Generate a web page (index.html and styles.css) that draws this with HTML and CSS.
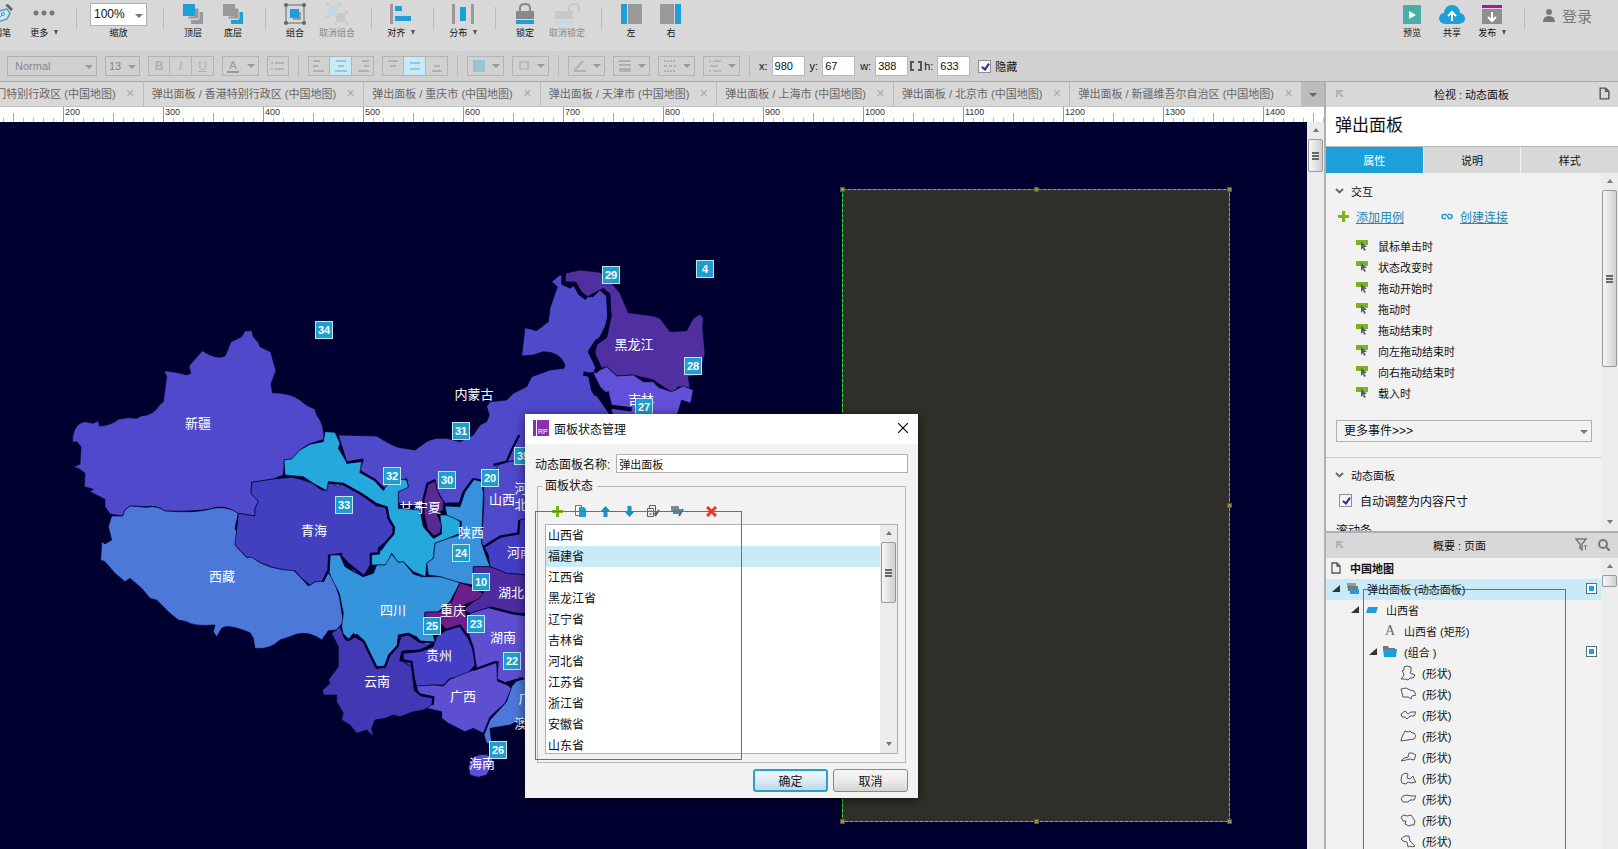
FILE: index.html
```html
<!DOCTYPE html>
<html lang="zh-CN">
<head>
    <meta charset="UTF-8">
    <meta name="viewport" content="width=device-width, initial-scale=1.0">
    <title>中国地图</title>
    <link rel="stylesheet" href="styles.css">
</head>
<body>
    <!-- icons used more than once -->
    <svg class="defs" width="0" height="0">
        <symbol id="i-event" viewBox="0 0 12 12">
            <path d="M0 0h12v5H9L5 1v4H0z" fill="#7ab51d"/>
            <path d="M5 1l6 6H8l2 3-2 1-1-3-2 2z" fill="#5c6066"/>
        </symbol>
        <symbol id="i-pin" viewBox="0 0 8 8">
            <path d="M1 7V1h6M1 1l6 6" fill="none" stroke="#b3b3b3" stroke-width="2"/>
        </symbol>
        <symbol id="i-page" viewBox="0 0 10 12">
            <path d="M1 1h5l3 3v7H1zM6 1v3h3" fill="none" stroke="currentColor" stroke-width="1.3"/>
        </symbol>
        <symbol id="i-chevron" viewBox="0 0 9 6">
            <path d="M1 1l3.5 3.5L8 1" fill="none" stroke="#666" stroke-width="1.8"/>
        </symbol>
        <symbol id="i-plus" viewBox="0 0 11 11">
            <path d="M4 0h3v4h4v3H7v4H4V7H0V4h4z" fill="#7ab51d"/>
        </symbol>
    </svg>

    <header class="toolbar">
        <button class="tool tool-pen">
            <svg width="22" height="22" viewBox="0 0 22 22"><path d="M4 20L8 8l8-2 3 4-3 6z" fill="#cfe8f3" stroke="#4d9cc0" stroke-width="1.5"/><path d="M4 20l7-8" stroke="#4d9cc0"/><circle cx="12" cy="11" r="1.5" fill="none" stroke="#4d9cc0"/><path d="M14 2l6 6 2-2-5-5z" fill="#666"/></svg>
            <span>钢笔</span>
        </button>
        <button class="tool">
            <svg width="22" height="22" viewBox="0 0 22 22"><g fill="#777"><circle cx="3" cy="10" r="2.5"/><circle cx="11" cy="10" r="2.5"/><circle cx="19" cy="10" r="2.5"/></g></svg>
            <span>更多 <i class="caret"></i></span>
        </button>
        <span class="sep"></span>
        <label class="zoom">
            <span class="select zoom-select"><select><option>100%</option></select></span>
            <span>缩放</span>
        </label>
        <span class="sep"></span>
        <button class="tool">
            <svg width="22" height="22" viewBox="0 0 22 22"><path d="M16 9h5v12H9v-4h7z" fill="#999"/><path d="M12 5h5v11H6v-3h6z" fill="#999" stroke="#d8d8d8"/><path d="M1 1h12v12H1z" fill="#1d9fd9"/></svg>
            <span>顶层</span>
        </button>
        <button class="tool">
            <svg width="22" height="22" viewBox="0 0 22 22"><path d="M16 9h5v12H9v-4h7z" fill="#1d9fd9"/><path d="M12 5h5v11H6v-3h6z" fill="#999" stroke="#d8d8d8"/><path d="M1 1h12v12H1z" fill="#999"/></svg>
            <span>底层</span>
        </button>
        <span class="sep"></span>
        <button class="tool">
            <svg width="22" height="22" viewBox="0 0 22 22"><path d="M9 9h8v8H9z" fill="#999"/><path d="M6 6h9v9H6z" fill="#1d9fd9"/><path d="M2 2h18v18H2z" fill="none" stroke="#666"/><g fill="#666"><circle cx="2" cy="2" r="2"/><circle cx="20" cy="2" r="2"/><circle cx="2" cy="20" r="2"/><circle cx="20" cy="20" r="2"/></g></svg>
            <span>组合</span>
        </button>
        <button class="tool tool-wide" disabled>
            <svg width="22" height="22" viewBox="0 0 22 22"><path d="M10 10h9v9h-9z" fill="#c8c8c8"/><path d="M3 3h9v9H3z" fill="#c3d8e0"/><g fill="#ccc"><path d="M0 0h3v3H0zM12 0h3v3h-3zM0 12h3v3H0zM19 8h3v3h-3zM8 19h3v3H8zM19 19h3v3h-3z"/></g></svg>
            <span>取消组合</span>
        </button>
        <span class="sep"></span>
        <button class="tool">
            <svg width="22" height="22" viewBox="0 0 22 22"><path d="M0 1h3v20H0z" fill="#999"/><path d="M5 3h7v5H5zM5 13h16v5H5z" fill="#1d9fd9"/></svg>
            <span>对齐 <i class="caret"></i></span>
        </button>
        <span class="sep"></span>
        <button class="tool">
            <svg width="22" height="22" viewBox="0 0 22 22"><path d="M0 1h3v20H0zM19 1h3v20h-3z" fill="#999"/><path d="M8 4h6v14H8z" fill="#1d9fd9"/></svg>
            <span>分布 <i class="caret"></i></span>
        </button>
        <span class="sep"></span>
        <button class="tool">
            <svg width="22" height="22" viewBox="0 0 22 22"><path d="M6 10V5q0-4 5-4t5 4v5" fill="none" stroke="#888" stroke-width="2"/><path d="M2 8h18v8H2z" fill="#888"/><path d="M2 17h18v4H2z" fill="#1d9fd9"/></svg>
            <span>锁定</span>
        </button>
        <button class="tool tool-wide" disabled>
            <svg width="26" height="22" viewBox="0 0 26 22"><path d="M15 10V5q0-4 5-4t5 4v3" fill="none" stroke="#c8c8c8" stroke-width="2"/><path d="M1 8h18v8H1z" fill="#c8c8c8"/><path d="M1 17h18v4H1z" fill="#bfdce8"/></svg>
            <span>取消锁定</span>
        </button>
        <span class="sep"></span>
        <button class="tool">
            <svg width="22" height="22" viewBox="0 0 22 22"><path d="M1 1h6v20H1z" fill="#1d9fd9"/><path d="M8 1h14v20H8z" fill="#999"/></svg>
            <span>左</span>
        </button>
        <button class="tool">
            <svg width="22" height="22" viewBox="0 0 22 22"><path d="M0 1h14v20H0z" fill="#999"/><path d="M15 1h6v20h-6z" fill="#1d9fd9"/></svg>
            <span>右</span>
        </button>
        <div class="toolbar-end">
            <button class="tool">
                <svg width="22" height="22" viewBox="0 0 22 22"><path d="M2 2h18v19H2z" fill="#4aada6"/><path d="M8 8l7 4-7 4z" fill="#fff"/></svg>
                <span>预览</span>
            </button>
            <button class="tool">
                <svg width="26" height="22" viewBox="0 0 26 22"><path d="M6 21q-6-1-6-6 1-5 5-5Q6 2 13 2t8 8q5 1 5 6 0 4-6 5z" fill="#1d9fd9"/><path d="M13 18v-8M9 13l4-4 4 4" fill="none" stroke="#fff" stroke-width="2"/></svg>
                <span>共享</span>
            </button>
            <button class="tool">
                <svg width="22" height="22" viewBox="0 0 22 22"><path d="M1 2h20v3H1z" fill="#b5119f"/><path d="M1 6h20v15H1z" fill="#8e8e8e"/><path d="M11 9v9M7 14l4 4 4-4" fill="none" stroke="#fff" stroke-width="2"/></svg>
                <span>发布 <i class="caret"></i></span>
            </button>
            <span class="sep"></span>
            <button class="login">
                <svg width="12" height="13" viewBox="0 0 12 13"><circle cx="6" cy="3" r="3" fill="#777"/><path d="M0 13q0-6 6-6t6 6z" fill="#777"/></svg>
                登录
            </button>
        </div>
    </header>

    <div class="formatbar">
        <span class="select format-font"><select aria-label="字体" disabled><option>Normal</option></select></span>
        <span class="select format-size"><select aria-label="字号" disabled><option>13</option></select></span>
        <div class="group">
            <button disabled><b>B</b></button>
            <button disabled><em>I</em></button>
            <button disabled><u>U</u></button>
        </div>
        <button class="drop" disabled><span class="font-color">A</span><i class="caret caret-wide"></i></button>
        <div class="group">
            <button disabled><svg width="14" height="12"><path d="M0 3h2M4 3h9M0 9h2M4 9h9" stroke="#aaa" stroke-width="1.5"/></svg></button>
        </div>
        <span class="sep"></span>
        <div class="group">
            <button disabled><svg width="14" height="12"><path d="M1 1h7M1 6h5M1 11h11" stroke="#b0b0b0" stroke-width="2"/></svg></button>
            <button class="on" disabled><svg width="14" height="12"><path d="M2 1h10M4 6h6M1 11h12" stroke="#9cc6d4" stroke-width="2"/></svg></button>
            <button disabled><svg width="14" height="12"><path d="M6 1h7M8 6h5M2 11h11" stroke="#b0b0b0" stroke-width="2"/></svg></button>
        </div>
        <div class="group">
            <button disabled><svg width="14" height="12"><path d="M2 1h10M4 6h6" stroke="#b0b0b0" stroke-width="2"/></svg></button>
            <button class="on" disabled><svg width="14" height="12"><path d="M2 3h10M2 9h10" stroke="#9cc6d4" stroke-width="2"/></svg></button>
            <button disabled><svg width="14" height="12"><path d="M4 6h6M2 11h10" stroke="#b0b0b0" stroke-width="2"/></svg></button>
        </div>
        <span class="sep"></span>
        <button class="drop" disabled><svg width="14" height="14"><path d="M1 1h12v12H1z" fill="#9cc3d0"/></svg><i class="caret caret-wide"></i></button>
        <button class="drop" disabled><svg width="14" height="14"><path d="M3 3h8v7H3z" fill="none" stroke="#bbb" stroke-width="2"/></svg><i class="caret caret-wide"></i></button>
        <span class="sep"></span>
        <button class="drop" disabled><svg width="14" height="14"><path d="M2 11L10 2M1 12h12" stroke="#b0b0b0" stroke-width="2"/></svg><i class="caret caret-wide"></i></button>
        <button class="drop" disabled><svg width="14" height="14"><path d="M1 2h12M1 6h12" stroke="#b0b0b0" stroke-width="2"/><path d="M1 11h12" stroke="#b0b0b0" stroke-width="4"/></svg><i class="caret caret-wide"></i></button>
        <button class="drop" disabled><svg width="14" height="14"><path d="M1 2h12M1 12h12" stroke="#b0b0b0" stroke-width="2" stroke-dasharray="2 1"/><path d="M1 7h12" stroke="#b0b0b0" stroke-width="2" stroke-dasharray="3 2"/></svg><i class="caret caret-wide"></i></button>
        <button class="drop" disabled><svg width="14" height="14"><path d="M5 2h8M2 7h8M5 12h8M1 2h2M1 12h2" stroke="#b0b0b0" stroke-width="1.5"/></svg><i class="caret caret-wide"></i></button>
        <span class="sep"></span>
        <div class="coords">
            <label class="coord">x: <input type="text" value="980"></label>
            <label class="coord">y: <input type="text" value="67"></label>
            <div class="size">
                <label class="coord">w: <input type="text" value="388"></label>
                <svg width="12" height="10"><path d="M4 1H1v8h3M8 1h3v8H8" fill="none" stroke="#555" stroke-width="2"/></svg>
                <label class="coord">h: <input type="text" value="633"></label>
            </div>
        </div>
        <label class="check check-bar"><input type="checkbox" checked>隐藏</label>
    </div>

    <div class="workspace">
        <main class="editor">
            <nav class="tabs">
                <div class="tabs-list">
                    <div class="tab">弹出面板 / 澳门特别行政区 (中国地图)<button>✕</button></div>
                    <div class="tab">弹出面板 / 香港特别行政区 (中国地图)<button>✕</button></div>
                    <div class="tab">弹出面板 / 重庆市 (中国地图)<button>✕</button></div>
                    <div class="tab">弹出面板 / 天津市 (中国地图)<button>✕</button></div>
                    <div class="tab">弹出面板 / 上海市 (中国地图)<button>✕</button></div>
                    <div class="tab">弹出面板 / 北京市 (中国地图)<button>✕</button></div>
                    <div class="tab">弹出面板 / 新疆维吾尔自治区 (中国地图)<button>✕</button></div>
                </div>
                <button class="tabs-more" aria-label="更多标签"><i class="caret caret-wide"></i></button>
            </nav>
            <div class="ruler">
                <span>200</span><span>300</span><span>400</span><span>500</span><span>600</span><span>700</span><span>800</span><span>900</span><span>1000</span><span>1100</span><span>1200</span><span>1300</span><span>1400</span>
            </div>
            <div class="stage">
                <div class="canvas">
                    <svg class="map" width="1307" height="727" viewBox="0 122 1307 727">
                        <!-- west -->
                        <g class="land" transform="translate(50 310) scale(.33333)">
                            <path fill="#5049cb" d="M343 185L350 183Q390 188 410 195L422 190 417 168 457 122Q500 150 525 138 538 110 542 96L575 80 585 63 605 62 610 80 625 98 630 110 662 126 678 182 663 222 667 248Q720 248 750 270 770 290 795 297L800 315Q822 340 822 388L775 403 750 420 727 447 703 450 700 495 670 507 605 517 603 550 615 560 625 575 615 595 615 618 565 610Q520 580 480 597 440 605 345 603 320 585 290 590L240 588 225 600 218 618 180 612 165 590 165 568 120 545 130 538 103 530 105 490 85 475 68 472 90 462 93 410 80 395 68 397Q65 360 90 340L105 335 130 340 145 332 148 348Q180 348 205 328L235 323 260 325 275 317Q310 318 330 283L340 275 350 200z"/>
                            <path fill="#4c78da" d="M240 588L290 592Q320 585 345 603 440 610 480 597 530 585 565 610L555 655 567 680 555 705 590 742 605 740Q650 780 730 780L750 800 775 828 835 790 850 805 868 860 880 935 860 960 835 962 815 990 800 980Q760 960 720 980L690 990Q660 1020 615 1015L610 985 600 968Q530 940 515 955L500 980 490 965 495 945Q430 950 410 935L385 930 360 910 320 870 300 865 275 835 240 805 225 815 195 790 165 755 152 750 155 695 165 702 185 690 175 650 185 618 218 618 225 600z"/>
                        </g>
                        <!-- centre and south -->
                        <g class="land" transform="translate(260 400) scale(.33333)">
                            <path fill="#4f4aca" d="M235 105L350 108Q400 140 420 143L465 150 500 125Q520 112 560 115L600 125 640 105 660 75 680 65 688 45 680 20 690 5 740 0 760-20 800-40 815-70 870-90 912-95 915-105Q900-145 850-145L820-135 785-132 795-217 830-208 865-235 870-275 892-340 875-355 900-375 912-370 910-345 930-335 945-345 970-310 1000-310 1020-330 1040-320 1045-240 1020-190 990-150 1010-85 985-80 1005-20 1040 30 1060 60 800 180 740 185 700 215 665 240 640 235 610 275 600 310 555 310 530 270 525 240 500 250 490 320 415 310 415 275 445 260 440 235 375 265 345 240 300 210 310 180 262 190z"/>
                            <path fill="#4340c0" d="M-25 247L40 237 95 232Q140 240 165 255 185 275 200 270L205 250Q230 245 250 255L270 262 305 285 350 318 378 320 385 355 400 380 400 400 375 430 355 445 355 460 330 460 330 495 310 530 280 515 265 490 245 470 245 460 205 465 205 510 185 545 165 545 150 555 125 535 105 512Q30 510-25 472L-40 472-75 435-65 340-15 348-15 325-5 305-27 280z"/>
                            <text class="province big" x="458" y="336">甘肃</text>
                            <path fill="#25a9dd" d="M195 95L225 97 240 130 235 145 262 190 305 185 300 215 345 240 370 270 400 235 440 240 445 262 415 275 415 325 480 330 490 380 520 415 545 395 540 345 570 345 600 365 600 400 565 415 525 430 520 475 500 490 497 530 460 515 430 485 415 487 395 460 380 495 335 495 335 465 365 450 400 400 400 380 385 355 378 320 350 310 305 280 250 250 235 260 205 245 200 272 160 250 130 230 75 225 72 180 95 177 120 150 150 133 190 125z"/>
                            <path fill="#5a2a92" d="M525 240L530 265 540 290 550 300 550 330 530 340 545 375 540 400 520 410 497 385 485 330 495 280 505 250z"/>
                            <path fill="#3990db" d="M640 238L665 245 670 280 665 430 675 460 690 500 640 500 640 555 600 548 570 542 540 530 505 525 500 490 520 475 525 430 565 415 600 405 605 365 560 345 555 318 600 320 615 275z"/>
                            <path fill="#5049cb" d="M670 240L700 215 720 190 740 185 800 180V350L775 400 720 410 672 440 665 430 672 300z"/>
                            <path fill="#443ec4" d="M672 440L720 410 775 400 778 360 800 355V525L740 520 690 500 685 465z"/>
                            <path fill="#3494dc" d="M205 510L210 465 240 465 255 500 280 515 310 530 340 520 350 495 375 495 395 462 415 487 430 485 460 522 485 530 540 530 600 548 570 605 535 635 495 637 490 700 520 705 525 725 495 740 470 710 445 700 415 705 412 740 385 765 375 800 350 800 325 750 310 720 290 710 280 700 265 720 250 705 245 680 250 640 238 580 215 535z"/>
                            <path fill="#4d2ca0" d="M640 500L690 500 740 520 800 525V640L760 640 690 622 630 640 610 630 670 580 665 550 640 525z"/>
                            <path fill="#5d4fd0" d="M630 640L690 622 760 640 800 645V840L760 840 740 850 710 840 715 785 650 805 640 740 625 700z"/>
                            <path fill="#6a1f8a" d="M600 548L635 560 670 580 655 598 610 615 620 650 630 690 620 710 600 675 560 690 530 660 495 650 495 637 540 635 575 605z"/>
                            <path fill="#4338b4" d="M215 700L240 680 255 718 265 722 280 705 290 715 310 725 325 755 350 805 375 800 390 765 415 735 425 705 445 702 480 725 510 740 480 750 425 755 420 780 455 800 465 870 480 885 520 890 520 915 490 930 460 935 420 950 400 945 375 955 345 960 335 985 340 1010 320 990 290 1000 270 975 245 960 250 940 230 905 230 885 190 885 188 870 210 850 205 840 235 800 235 740z"/>
                            <path fill="#443ec4" d="M430 760L480 755 520 740 530 710 560 690 600 675 620 705 635 740 640 760 645 795 615 830 570 835 550 855 520 855 470 860 455 800 430 785z"/>
                            <path fill="#5d4fd0" d="M470 858L520 855 550 858 570 838 640 810 710 785 712 840 735 850 755 865 735 910 690 950 670 1000 640 985 615 995 565 970 545 955 545 935 500 925 520 910 520 890 475 880z"/>
                            <path fill="#4c78da" d="M755 860L780 830 800 840V950L750 975 690 985 695 1030 680 1030 672 1005 690 960 740 905z"/>
                            <path fill="#5d4fd0" d="M625 1100L640 1070Q690 1050 700 1085L680 1125 655 1132 630 1125z"/>
                            <path class="river thin" d="M258 188L310 179M300 215L345 240 372 270M205 247L250 252 305 283 350 314 380 322 386 355 402 382 400 402 375 430 357 445 357 460 332 462M525 240L502 252 490 300 490 340 500 388 522 412 545 398M640 237L610 278 600 310 560 312M208 465L206 510 188 545M245 470L265 492 310 528M250 705L265 720 290 705 312 725 325 753 350 803 375 800 388 766 413 738 418 708 445 702 480 725 522 728M512 738L480 752 428 755 422 780 455 786 458 810 465 870 482 885 520 892 518 915M672 440L720 410 775 400 778 360M690 622L760 640 800 645M530 660L555 690 600 677 622 708M640 810L710 785M712 840L735 850 790 835M778 105L755 150 740 185 700 195"/>
                        </g>
                        <!-- north east -->
                        <g class="land" transform="translate(440 240) scale(.33333)">
                            <path fill="#502fa0" d="M375 100L420 90 480 97 520 135 540 160 565 218 640 228 660 235 690 275 740 272 760 235 780 222 790 235 788 265 795 340 780 405 745 410 750 445 715 440 700 460 655 430 640 420 580 405 530 408 500 380 485 385 465 340 470 315 500 290 512 230 508 165 485 148 460 160 440 172 420 155 410 130 385 128 370 135z"/>
                            <path fill="#6250d8" d="M460 400L500 380 530 408 580 405 610 425 640 425 655 442 695 455 730 438 760 450 752 490 725 480 710 530 520 530 500 460 480 440z"/>
                            <path class="river" d="M372 95L370 130 405 132 420 160 440 175M485 148L505 165 508 230 495 290 470 305 450 335 475 385 465 395M430 400L450 405 460 450 470 465M500 455L510 500 575 508"/>
                        </g>

                        <g class="province">
                            <text x="198" y="428">新疆</text>
                            <text x="222" y="581">西藏</text>
                            <text x="314" y="535">青海</text>
                            <text x="393" y="615">四川</text>
                            <text x="377" y="686">云南</text>
                            <text x="439" y="660">贵州</text>
                            <text x="463" y="701">广西</text>
                            <text x="482" y="768">海南</text>
                            <text x="503" y="642">湖南</text>
                            <text x="511" y="597">湖北</text>
                            <text x="453" y="615">重庆</text>
                            <text x="428" y="512">宁夏</text>
                            <text x="471" y="537">陕西</text>
                            <text x="502" y="504">山西</text>
                            <text x="520" y="557">河南</text>
                            <text x="521" y="493">河</text>
                            <text x="521" y="509">北</text>
                            <text x="525" y="703">广</text>
                            <text x="521" y="728">澳</text>
                            <text x="634" y="349">黑龙江</text>
                            <text x="641" y="404">吉林</text>
                            <text x="474" y="399">内蒙古</text>
                        </g>

                        <!-- dynamic panel selected on the canvas -->
                        <g class="selection">
                            <rect class="panel-area" x="842.5" y="189.5" width="387" height="632"/>
                            <path class="handles" d="M840.5 187.500h4v4h-4zM1034.500 187.500h4v4h-4zM1227.500 187.500h4v4h-4zM1227.500 503.500h4v4h-4zM1227.500 819.500h4v4h-4zM1034.500 819.500h4v4h-4zM840.5 819.500h4v4h-4z"/>
                        </g>
                    </svg>
                    <span class="note" style="left: 315px; top: 199px">34</span>
                    <span class="note" style="left: 335px; top: 374px">33</span>
                    <span class="note" style="left: 383px; top: 345px">32</span>
                    <span class="note" style="left: 452px; top: 300px">31</span>
                    <span class="note" style="left: 438px; top: 349px">30</span>
                    <span class="note" style="left: 481px; top: 347px">20</span>
                    <span class="note" style="left: 514px; top: 325px">35</span>
                    <span class="note" style="left: 452px; top: 422px">24</span>
                    <span class="note" style="left: 472px; top: 451px">10</span>
                    <span class="note" style="left: 423px; top: 495px">25</span>
                    <span class="note" style="left: 467px; top: 493px">23</span>
                    <span class="note" style="left: 503px; top: 530px">22</span>
                    <span class="note" style="left: 489px; top: 619px">26</span>
                    <span class="note" style="left: 602px; top: 144px">29</span>
                    <span class="note" style="left: 696px; top: 138px">4</span>
                    <span class="note" style="left: 684px; top: 235px">28</span>
                    <span class="note" style="left: 635px; top: 276px">27</span>

                    <section class="dialog">
                        <div class="dialog-title">
                            <svg width="16" height="16"><path d="M0 0h16v16H0z" fill="#8c2fb0"/><path d="M3 0h1v16H3z" fill="#fff"/><text x="5" y="14" class="rp">RP</text></svg>
                            <h2>面板状态管理</h2>
                            <button aria-label="关闭"><svg width="10" height="10"><path d="M0 0l10 10M10 0L0 10" stroke="#000" stroke-width="1.2"/></svg></button>
                        </div>
                        <div class="dialog-body">
                            <label class="panel-name">动态面板名称: <input type="text" value="弹出面板"></label>
                            <fieldset>
                                <legend>面板状态</legend>
                                <div class="state-tools">
                                    <button aria-label="添加"><svg width="11" height="11"><use href="#i-plus"/></svg></button>
                                    <button aria-label="复制"><svg width="12" height="12"><path d="M.5.5h6v10h-6z" fill="#fff" stroke="#1d8fc4"/><path d="M4 2h5l2 2v8H4z" fill="#1d9fd9"/></svg></button>
                                    <button aria-label="上移"><svg width="9" height="11"><path d="M4.500 0L9 5H6.500v6h-4V5H0z" fill="#1d8fc4"/></svg></button>
                                    <button aria-label="下移"><svg width="9" height="11"><path d="M4.500 11L9 6H6.500V0h-4v6H0z" fill="#1d8fc4"/></svg></button>
                                    <button aria-label="编辑状态"><svg width="13" height="12"><path d="M.5 3.500h6v8h-6zM2.500 3V.5h6v8h-2M2 6h3M2 9h3" fill="none" stroke="#47627a"/><path d="M8 11l4-6" stroke="#555" stroke-width="2"/></svg></button>
                                    <button aria-label="编辑全部状态"><svg width="13" height="12"><path d="M0 1h8v5H0z" fill="#888"/><path d="M2 4h8v5H2z" fill="#4a8db0"/><path d="M8 11l4-7" stroke="#666" stroke-width="2"/></svg></button>
                                    <button class="remove" aria-label="删除"><svg width="11" height="11"><path d="M1 1l9 9M10 1l-9 9" stroke="#e8392b" stroke-width="3"/></svg></button>
                                </div>
                                <div class="states">
                                    <ul>
                                        <li>山西省</li>
                                        <li class="selected">福建省</li>
                                        <li>江西省</li>
                                        <li>黑龙江省</li>
                                        <li>辽宁省</li>
                                        <li>吉林省</li>
                                        <li>河北省</li>
                                        <li>江苏省</li>
                                        <li>浙江省</li>
                                        <li>安徽省</li>
                                        <li>山东省</li>
                                    </ul>
                                    <div class="scrollbar"><i class="up"></i><b class="thumb thumb-states"></b><i class="down"></i></div>
                                </div>
                            </fieldset>
                            <div class="dialog-actions">
                                <button class="primary">确定</button>
                                <button>取消</button>
                            </div>
                        </div>
                        <span class="mark mark-states"></span>
                    </section>
                </div>
                <div class="scrollbar"><i class="up"></i><b class="thumb thumb-stage"></b></div>
            </div>
        </main>

        <aside class="sidebar">
            <div class="side-head">
                <svg width="8" height="8"><use href="#i-pin"/></svg>
                <h3>检视 : 动态面板</h3>
                <svg class="page-icon" width="11" height="13"><use href="#i-page"/></svg>
            </div>
            <div class="side-name">弹出面板</div>
            <div class="side-tabs">
                <button class="active">属性</button>
                <button>说明</button>
                <button>样式</button>
            </div>
            <div class="side-scroll props-scroll">
                <div class="props">
                    <h4><svg width="9" height="6"><use href="#i-chevron"/></svg>交互</h4>
                    <div class="links">
                        <svg width="11" height="11"><use href="#i-plus"/></svg><a href="#">添加用例</a>
                        <svg class="chain" width="12" height="7"><path d="M5 5.500H3a2 2 0 010-4h2l3 4h1a2 2 0 000-4H7" fill="none" stroke="#2a98c9" stroke-width="1.5"/></svg><a href="#">创建连接</a>
                    </div>
                    <ul class="events">
                        <li><svg width="12" height="12"><use href="#i-event"/></svg>鼠标单击时</li>
                        <li><svg width="12" height="12"><use href="#i-event"/></svg>状态改变时</li>
                        <li><svg width="12" height="12"><use href="#i-event"/></svg>拖动开始时</li>
                        <li><svg width="12" height="12"><use href="#i-event"/></svg>拖动时</li>
                        <li><svg width="12" height="12"><use href="#i-event"/></svg>拖动结束时</li>
                        <li><svg width="12" height="12"><use href="#i-event"/></svg>向左拖动结束时</li>
                        <li><svg width="12" height="12"><use href="#i-event"/></svg>向右拖动结束时</li>
                        <li><svg width="12" height="12"><use href="#i-event"/></svg>载入时</li>
                    </ul>
                    <span class="select more-events"><select aria-label="更多事件"><option>更多事件&gt;&gt;&gt;</option></select></span>
                    <h4 class="ruled"><svg width="9" height="6"><use href="#i-chevron"/></svg>动态面板</h4>
                    <label class="check check-fit"><input type="checkbox" checked>自动调整为内容尺寸</label>
                    <div class="scroll-label">滚动条</div>
                </div>
                <div class="scrollbar"><i class="up"></i><b class="thumb thumb-props"></b><i class="down"></i></div>
            </div>
            <div class="side-head outline-head">
                <svg width="8" height="8"><use href="#i-pin"/></svg>
                <h3>概要 : 页面</h3>
                <svg width="13" height="13"><path d="M1 1h10L7 6v6L5 10V6z" fill="none" stroke="#777" stroke-width="1.5"/><path d="M10.500 12V7M9 8.500L10.500 7 12 8.500" fill="none" stroke="#777"/></svg>
                <svg width="12" height="12"><circle cx="5" cy="5" r="4" fill="none" stroke="#777" stroke-width="2"/><path d="M8 8l4 4" stroke="#777" stroke-width="2"/></svg>
            </div>
            <div class="side-scroll tree-scroll">
                <ul class="tree">
                    <li class="root"><span class="icon"><svg class="page-icon" width="10" height="12"><use href="#i-page"/></svg></span>中国地图</li>
                    <li class="selected"><i class="fold"></i><span class="icon"><svg width="13" height="11"><path d="M0 0h9v5H0z" fill="#999"/><path d="M1 3h10v5H1z" fill="#777"/><path d="M3 6h9v5H3z" fill="#1d9fd9"/></svg></span>弹出面板 (动态面板)<b class="eye"></b></li>
                    <li class="l1"><i class="fold"></i><span class="icon"><svg width="12" height="6"><path d="M2 0h10l-2 6H0z" fill="#1d9fd9"/></svg></span>山西省</li>
                    <li class="l2"><i class="fold none"></i><span class="icon letter">A</span>山西省 (矩形)</li>
                    <li class="l2"><i class="fold"></i><span class="icon"><svg width="14" height="11"><path d="M0 0h5l1 2h6v3H0z" fill="#777"/><path d="M0 3h14l-1 8H1z" fill="#1d9fd9"/></svg></span>(组合 )<b class="eye"></b></li>
                    <li class="l3"><i class="fold none"></i><span class="icon"><svg width="16" height="16"><path d="M4 2l3-1 4 1 0 4-1 2 5 2-2 3-3 0-2 2-3-1-4 0 3-4-1-3-1-1 2-1z"/></svg></span>(形状)</li>
                    <li class="l3"><i class="fold none"></i><span class="icon"><svg width="16" height="16"><path d="M1 3l5-1 4 2 4 1 2 4-4 1-1 3-3-2-5 0-1-4z"/></svg></span>(形状)</li>
                    <li class="l3"><i class="fold none"></i><span class="icon"><svg width="16" height="16"><path d="M1 7l4-3 3 3 3-2 5 0-2 4-4 0-3 3-2-2-3 0z"/></svg></span>(形状)</li>
                    <li class="l3"><i class="fold none"></i><span class="icon"><svg width="16" height="16"><path d="M1 13l1-4 3-6 3 1 2-1 2 2 2 0 2 3-2 3-6 1z"/></svg></span>(形状)</li>
                    <li class="l3"><i class="fold none"></i><span class="icon"><svg width="16" height="16"><path d="M1 12l3-3 4-1 1-4 3 0 4 2-2 5-4-1-4 1z"/></svg></span>(形状)</li>
                    <li class="l3"><i class="fold none"></i><span class="icon"><svg width="16" height="16"><path d="M1 10l1-5 3-2 3 1-1 4 3 1 3-3 1 3 2 3-5 1-3-1-2 2-4-1z"/></svg></span>(形状)</li>
                    <li class="l3"><i class="fold none"></i><span class="icon"><svg width="16" height="16"><path d="M1 8l2-3 4-1 4 1 5 0-2 4-4 0-2 2-5 0z"/></svg></span>(形状)</li>
                    <li class="l3"><i class="fold none"></i><span class="icon"><svg width="16" height="16"><path d="M1 5l3-2 3 1 4-1 2 3 2 3-1 4-3 0-2 1-4-2 1-3-3 0z"/></svg></span>(形状)</li>
                    <li class="l3"><i class="fold none"></i><span class="icon"><svg width="16" height="16"><path d="M1 6l4-3 4 0 1 5 2 2 3 3-3 1-2-1-2 1-1-5-4-1z"/></svg></span>(形状)</li>
                </ul>
                <div class="scrollbar"><i class="up"></i><b class="thumb thumb-tree"></b></div>
                <span class="mark mark-tree"></span>
            </div>
        </aside>
    </div>
</body>
</html>
```

FILE: styles.css
```css
* {
    box-sizing: border-box;
}
body {
    margin: 0;
    height: 100vh;
    display: flex;
    flex-direction: column;
    overflow: hidden;
    background-color: #f2f2f2;
    color: #111;
    font-family: "Liberation Sans", "Noto Sans CJK SC", sans-serif;
    font-size: 11px;
}
button, input, select {
    font: inherit;
    color: inherit;
    margin: 0;
    padding: 0;
}
button {
    background: none;
    border: none;
}
ul {
    list-style: none;
    margin: 0;
    padding: 0;
}
h2, h3, h4 {
    margin: 0;
    font-weight: normal;
    font-size: 11px;
}
svg {
    display: block;
    flex: none;
}
.defs {
    position: absolute;
}
.caret {
    display: inline-block;
    border: 2px solid transparent;
    border-top: 5px solid #555;
    border-bottom: 0;
    margin-left: 3px;
    vertical-align: 1px;
}
.caret-wide {
    border-width: 4px 4px 0;
    border-top-color: #999;
    margin: 0;
}

/* select with a flat arrow */
.select {
    display: inline-block;
    position: relative;
    border: 1px solid #b0b0b0;
}
.select select {
    appearance: none;
    width: 100%;
    height: 100%;
    border: none;
    background: none;
    padding-left: 7px;
    opacity: 1;
}
.select::after {
    content: "";
    position: absolute;
    right: 3px;
    top: 50%;
    margin-top: -1px;
    border: 4px solid transparent;
    border-top-color: #777;
    border-bottom: 0;
}

/* main toolbar */
.toolbar {
    display: flex;
    flex: none;
    height: 51px;
    padding-top: 3px;
    background-color: #d8d8d8;
    font-size: 9px;
}
.tool {
    flex: none;
    width: 40px;
    display: flex;
    flex-direction: column;
    align-items: center;
    gap: 2px;
    height: 40px;
    line-height: 13px;
    white-space: nowrap;
}
.tool-pen {
    margin-left: -18px;
    margin-right: 2px;
}
.tool-wide {
    width: 44px;
}
.tool:disabled {
    color: #888;
}
.sep {
    flex: none;
    width: 1px;
    height: 22px;
    background-color: #bbb;
    margin: 4px 9px 0 12px;
}
.zoom {
    width: 65px;
    display: flex;
    flex-direction: column;
    align-items: center;
    line-height: 13px;
}
.zoom-select {
    width: 57px;
    height: 23px;
    margin-bottom: 1px;
    background-color: #fff;
    font-size: 12px;
}
.zoom-select select {
    padding-left: 3px;
}
.toolbar-end {
    display: flex;
    margin-left: auto;
    padding-right: 26px;
}
.login {
    display: flex;
    align-items: center;
    gap: 7px;
    height: 24px;
    margin-left: 9px;
    font-size: 15px;
    color: #777;
}

/* format bar */
.formatbar {
    display: flex;
    flex: none;
    align-items: center;
    gap: 8px;
    height: 30px;
    padding-left: 7px;
    background-color: #d1d1d1;
}
.formatbar .sep {
    margin: 0 1px;
}
.formatbar .select {
    height: 20px;
    color: #888;
}
.formatbar .select::after {
    border-top-color: #999;
}
.format-font {
    width: 90px;
}
.format-size {
    width: 35px;
}
.format-size select {
    padding-left: 3px;
}
.group {
    display: flex;
    height: 20px;
    border: 1px solid #b3b3b3;
}
.group button {
    display: flex;
    align-items: center;
    justify-content: center;
    width: 20px;
    color: #b0b0b0;
    font-size: 12px;
}
.group button + button {
    width: 22px;
    border-left: 1px solid #b3b3b3;
}
.group em {
    font-family: "Liberation Serif", serif;
}
.group .on {
    background-color: #c8eaf8;
}
.drop {
    display: flex;
    align-items: center;
    justify-content: space-between;
    width: 37px;
    height: 20px;
    padding: 0 3px 0 4px;
    border: 1px solid #b3b3b3;
    color: #999;
}
.font-color {
    width: 12px;
    line-height: 12px;
    border-bottom: 2px solid #999;
}
.coords {
    display: flex;
    align-items: center;
    gap: 5px;
}
.coord {
    display: flex;
    align-items: center;
    gap: 4px;
    font-size: 11px;
}
.coord input {
    width: 33px;
    height: 20px;
    border: 1px solid #b8b8b8;
    background-color: #fff;
    padding-left: 2px;
}
.size {
    display: flex;
    align-items: center;
    gap: 2px;
}
.check {
    display: flex;
    align-items: center;
}
.check input {
    appearance: none;
    position: relative;
    width: 13px;
    height: 13px;
    border: 1px solid #8e8f8f;
    background-color: #f2f4f8;
}
.check input:checked::before {
    content: "";
    position: absolute;
    left: 4px;
    top: 1px;
    width: 3px;
    height: 6px;
    border: solid #28328c;
    border-width: 0 2px 2px 0;
    transform: rotate(35deg);
}
.check-bar {
    gap: 4px;
}

/* editor */
.workspace {
    flex: 1;
    min-height: 0;
    display: flex;
    border-top: 1px solid #a8a8a8;
}
.editor {
    flex: 1;
    min-width: 0;
    display: flex;
    flex-direction: column;
}
.tabs {
    display: flex;
    flex: none;
    height: 24px;
    background-color: #d8d8d8;
}
.tabs-list {
    flex: 1;
    min-width: 0;
    display: flex;
    justify-content: flex-end;
    overflow: hidden;
}
.tab {
    flex: none;
    display: flex;
    align-items: center;
    gap: 9px;
    padding: 0 7px 2px 8px;
    border-right: 1px solid #bdbdbd;
    color: #666;
    white-space: nowrap;
}
.tab button {
    width: 11px;
    color: #aaa;
    font-family: "DejaVu Sans", sans-serif;
}
.tabs-more {
    width: 22px;
    background-color: #bcbcbc;
}
.tabs-more .caret {
    border-top-color: #666;
}
.ruler {
    flex: none;
    display: flex;
    height: 16px;
    padding-left: 63px;
    overflow: hidden;
    border-top: 1px solid #c4c4c4;
    background:
        repeating-linear-gradient(to right, #999 0 1px, transparent 1px 100px) 63px 0 / 100px 100% repeat-x,
        repeating-linear-gradient(to right, #aaa 0 1px, transparent 1px 50px) 13px 100% / 100px 9px repeat-x,
        repeating-linear-gradient(to right, #bbb 0 1px, transparent 1px 10px) 3px 100% / 100px 4px repeat-x,
        #fff;
}
.ruler span {
    flex: none;
    width: 100px;
    padding-left: 2px;
    font-size: 9px;
    line-height: 11px;
    color: #333;
}
.stage {
    flex: 1;
    min-height: 0;
    display: flex;
}
.canvas {
    flex: 1;
    min-width: 0;
    position: relative;
    overflow: hidden;
    background-color: #000030;
}
.map {
    position: absolute;
    left: 0;
    top: 0;
}
.land path {
    stroke: #000030;
    stroke-width: 2;
    stroke-linejoin: round;
}
.land .river {
    fill: none;
    stroke-width: 13;
}
.land .thin {
    stroke-width: 7;
}
.province {
    fill: #fff;
    font-size: 13px;
    text-anchor: middle;
}
.province.big {
    font-size: 39px;
}
.panel-area {
    fill: #302f29;
    stroke: #35e035;
    stroke-dasharray: 4 1;
}
.handles {
    fill: #9a9048;
    stroke: #5c5c28;
}
.note {
    position: absolute;
    width: 18px;
    height: 18px;
    border: 1px solid #bfe6f5;
    background-color: #1f9dcb;
    color: #fff;
    font-size: 11px;
    font-weight: bold;
    line-height: 16px;
    text-align: center;
}

/* scrollbars */
.scrollbar {
    flex: none;
    display: flex;
    flex-direction: column;
    align-items: center;
    width: 17px;
    background-color: #ececec;
}
.scrollbar .up, .scrollbar .down {
    width: 0;
    height: 0;
    margin: 6px 0 7px;
    border: 3px solid transparent;
    border-top: 0;
    border-bottom: 4px solid #777;
}
.scrollbar .down {
    margin-top: auto;
    border-top: 4px solid #777;
    border-bottom: 0;
}
.thumb {
    display: flex;
    align-items: center;
    justify-content: center;
    width: 15px;
    border: 1px solid #999;
    border-radius: 2px;
    background: linear-gradient(to right, #f6f6f6, #e4e4e4 50%, #cfcfcf);
}
.thumb::before {
    content: "";
    width: 7px;
    height: 8px;
    background: repeating-linear-gradient(#666 0 2px, transparent 2px 3px);
}
.thumb-stage {
    height: 33px;
}
.thumb-states {
    height: 61px;
}
.thumb-props {
    height: 177px;
}
.thumb-tree {
    height: 12px;
}
.thumb-tree::before {
    content: none;
}
.mark {
    position: absolute;
    border: 1px solid #d9404a;
    pointer-events: none;
}

/* panel state dialog */
.dialog {
    position: absolute;
    left: 525px;
    top: 292px;
    width: 393px;
    background-color: #f2f2f2;
    box-shadow: 0 2px 10px rgba(0, 0, 0, 0.6);
    font-size: 12px;
}
.dialog-title {
    display: flex;
    align-items: center;
    gap: 5px;
    height: 30px;
    padding: 0 10px 2px 8px;
    background-color: #fff;
}
.dialog-title h2 {
    flex: 1;
    font-size: 12px;
}
.rp {
    fill: #fff;
    font-size: 7px;
}
.dialog-body {
    padding: 10px 10px 6px 10px;
}
.panel-name {
    display: flex;
    align-items: center;
    gap: 6px;
}
.panel-name input {
    flex: 1;
    min-width: 0;
    height: 19px;
    padding: 0 2px;
    border: 1px solid #b0b0b0;
    background-color: #fff;
    font-size: 11px;
}
fieldset {
    margin: 4px 2px 0 2px;
    padding: 0 7px 8px;
    border: 1px solid #b8b8b8;
}
legend {
    padding: 0 4px 0 3px;
    margin-left: -3px;
    line-height: 18px;
}
.state-tools {
    display: flex;
    align-items: center;
    height: 29px;
    padding-top: 3px;
}
.state-tools button {
    width: 24px;
    display: flex;
    justify-content: center;
}
.state-tools .remove {
    margin-left: 10px;
}
.states {
    display: flex;
    height: 230px;
    border: 1px solid #b0b0b0;
    background-color: #fff;
}
.states ul {
    flex: 1;
    overflow: hidden;
}
.states li {
    height: 21px;
    line-height: 22px;
    padding-left: 2px;
}
.selected {
    background-color: #c9eaf7;
}
.dialog-actions {
    display: flex;
    justify-content: flex-end;
    gap: 5px;
    margin-top: 6px;
}
.dialog-actions button {
    width: 75px;
    height: 23px;
    border: 1px solid #888;
    border-radius: 3px;
    background: linear-gradient(#f6f6f6, #ececec 50%, #d4d4d4);
}
.dialog-actions .primary {
    border: 2px solid #2c9fc6;
    background: linear-gradient(#eef7fc, #dcecf6 50%, #b9d9ec);
}
.mark-states {
    left: 10px;
    top: 97px;
    width: 207px;
    height: 249px;
}

/* sidebar */
.sidebar {
    flex: none;
    width: 294px;
    display: flex;
    flex-direction: column;
    border-left: 2px solid #b0b0b0;
}
.side-head {
    flex: none;
    display: flex;
    align-items: center;
    gap: 10px;
    height: 25px;
    padding: 0 8px 2px 10px;
    background-color: #d8d8d8;
}
.side-head h3 {
    flex: 1;
    text-align: center;
}
.page-icon {
    color: #555;
}
.side-name {
    flex: none;
    height: 39px;
    padding-left: 9px;
    background-color: #fff;
    font-size: 17px;
    line-height: 38px;
}
.side-tabs {
    flex: none;
    display: flex;
    gap: 1px;
    height: 27px;
    border-top: 1px solid #b8b8b8;
}
.side-tabs button {
    flex: 1;
    background-color: #d8d8d8;
}
.side-tabs .active {
    background-color: #1d9fd9;
    color: #fff;
}
.side-scroll {
    display: flex;
    position: relative;
    overflow: hidden;
}
.props-scroll {
    flex: none;
    height: 358px;
}
.props {
    flex: 1;
}
.props h4 {
    display: flex;
    align-items: center;
    gap: 7px;
    height: 35px;
    padding-left: 9px;
}
.links {
    display: flex;
    align-items: center;
    gap: 7px;
    height: 16px;
    padding-left: 12px;
    font-size: 12px;
}
.links a {
    color: #1c87b3;
}
.chain {
    margin-left: 30px;
}
.events {
    padding: 11px 0 0 30px;
}
.events li {
    display: flex;
    align-items: center;
    gap: 10px;
    height: 21px;
}
.more-events {
    display: block;
    height: 22px;
    margin: 17px 9px 15px 10px;
    font-size: 12px;
}
.props .ruled {
    border-top: 1px solid #c8c8c8;
}
.check-fit {
    gap: 8px;
    height: 17px;
    padding-left: 13px;
    font-size: 12px;
}
.scroll-label {
    padding: 13px 0 0 10px;
    font-size: 12px;
    line-height: 18px;
}
.outline-head {
    height: 27px;
    border-top: 2px solid #b0b0b0;
}
.tree-scroll {
    flex: 1;
    min-height: 0;
}
.tree {
    flex: 1;
}
.tree li {
    display: flex;
    align-items: center;
    height: 21px;
    padding: 0 0 2px 6px;
}
.tree .root {
    padding-left: 1px;
    font-weight: bold;
}
.tree .l1 {
    padding-left: 25px;
}
.tree .l2 {
    padding-left: 43px;
}
.tree .l3 {
    padding-left: 61px;
}
.fold {
    width: 8px;
    height: 7px;
    margin-right: 4px;
    background-color: #333;
    clip-path: polygon(100% 0, 100% 100%, 0 100%);
}
.fold.none {
    background: none;
}
.icon {
    display: flex;
    justify-content: center;
    width: 18px;
    margin-right: 5px;
}
.l3 .icon path {
    fill: none;
    stroke: #555;
}
.letter {
    font-family: "Liberation Serif", serif;
    font-size: 14px;
    color: #666;
}
.eye {
    width: 11px;
    height: 11px;
    margin: 0 4px 0 auto;
    border: 1px solid #56707c;
    background-color: #1d9fd9;
    box-shadow: inset 0 0 0 2px #fff;
}
.mark-tree {
    left: 37px;
    top: 31px;
    width: 203px;
    height: 400px;
}
```
